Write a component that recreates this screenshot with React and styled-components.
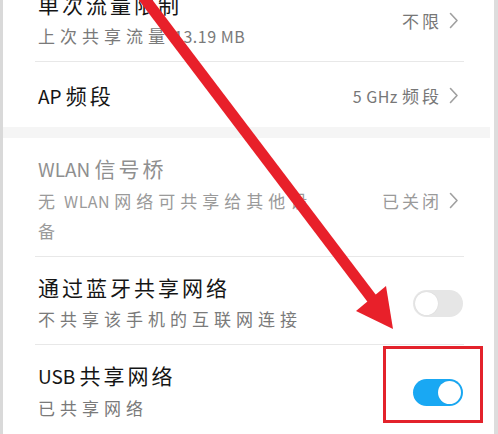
import React from "react";
import styled, { createGlobalStyle } from "styled-components";

const GlobalStyle = createGlobalStyle`
  html, body {
    margin: 0;
    padding: 0;
    background: #ffffff;
  }
  body {
    font-family: "Noto Sans CJK SC", "Noto Sans", sans-serif;
    overflow: hidden;
  }
`;

const Screen = styled.div`
  position: relative;
  width: 498px;
  height: 434px;
  overflow: hidden;
  box-sizing: border-box;
  background: #ffffff;
  border-left: 3px solid #d9d9d9;
  border-right: 4px solid #dddddd;
`;

const List = styled.div`
  display: flex;
  flex-direction: column;
  margin-top: -26px;
`;

const Row = styled.div`
  display: flex;
  align-items: center;
  justify-content: space-between;
  gap: 20px;
  margin: 0 30px 0 32px;
  padding: ${(p) => (p.$single ? "19px 0 17px" : "16px 0 10px")};
  border-bottom: ${(p) => (p.$last ? "none" : "1px solid #e8e8e8")};
`;

const Gap = styled.div`
  height: 11px;
  margin-right: 4px;
  background: #f5f5f5;
`;

const TextBlock = styled.div`
  display: flex;
  flex-direction: column;
  flex: 1;
  min-width: 0;
  max-width: 285px;
  padding-left: 3px;
`;

const Title = styled.div`
  font-size: 21px;
  line-height: 28px;
  letter-spacing: 3px;
  color: ${(p) => (p.$disabled ? "#8f8f8f" : "#151515")};
  white-space: nowrap;
`;

const Sub = styled.div`
  margin-top: 3px;
  font-size: 17px;
  line-height: 30px;
  letter-spacing: 5px;
  color: ${(p) => (p.$disabled ? "#9a9a9a" : "#7a7a7a")};
`;

const Latin = styled.span`
  font-size: ${(p) => (p.$small ? "16px" : "19px")};
  letter-spacing: ${(p) => (p.$small ? "0.5px" : "0")};
`;

const Value = styled.div`
  display: flex;
  align-items: center;
  gap: 7px;
  padding-right: 5px;
  font-size: 17px;
  letter-spacing: 3px;
  color: ${(p) => (p.$disabled ? "#9a9a9a" : "#777777")};
  white-space: nowrap;
`;

const Toggle = styled.div`
  position: relative;
  width: 50px;
  height: 27px;
  border-radius: 14px;
  flex-shrink: 0;
  margin-right: 1px;
  background: ${(p) => (p.$on ? "#19a8f3" : "#e6e6e6")};

  &::after {
    content: "";
    position: absolute;
    top: 2px;
    left: ${(p) => (p.$on ? "25px" : "2px")};
    width: 23px;
    height: 23px;
    border-radius: 50%;
    background: #ffffff;
    box-shadow: 0 0 1px rgba(0, 0, 0, 0.15);
  }
`;

const HighlightBox = styled.div`
  position: absolute;
  left: 380px;
  top: 346px;
  width: 100px;
  height: 77px;
  box-sizing: border-box;
  border: 3px solid #e3222b;
`;

const ArrowLayer = styled.svg`
  position: absolute;
  left: -3px;
  top: 0;
  pointer-events: none;
`;

const Chevron = () => (
  <svg width="10" height="17" viewBox="0 0 10 17">
    <path d="M1.5 1.5 L8 8.5 L1.5 15.5" fill="none" stroke="#a0a0a0" strokeWidth="1.6" strokeLinecap="round" strokeLinejoin="round" />
  </svg>
);

const SettingRow = ({ title, sub, value, toggle, disabled, single, last }) => (
  <Row $single={single} $last={last}>
    <TextBlock>
      <Title $disabled={disabled}>{title}</Title>
      {sub && <Sub $disabled={disabled}>{sub}</Sub>}
    </TextBlock>
    {value && (
      <Value $disabled={disabled}>
        <span>{value}</span>
        <Chevron />
      </Value>
    )}
    {toggle !== undefined && <Toggle $on={toggle} />}
  </Row>
);

export default function App() {
  return (
    <>
      <GlobalStyle />
      <Screen>
        <List>
          <SettingRow
            title="单次流量限制"
            sub={
              <>
                上次共享流量<Latin $small> 13.19 MB</Latin>
              </>
            }
            value="不限"
          />
          <SettingRow
            single
            last
            title={
              <>
                <Latin>AP </Latin>频段
              </>
            }
            value={
              <>
                <Latin $small>5 GHz </Latin>频段
              </>
            }
          />
          <Gap />
          <SettingRow
            disabled
            title={
              <>
                <Latin>WLAN </Latin>信号桥
              </>
            }
            sub={
              <>
                无<Latin $small> WLAN </Latin>网络可共享给其他设备
              </>
            }
            value="已关闭"
          />
          <SettingRow title="通过蓝牙共享网络" sub="不共享该手机的互联网连接" toggle={false} />
          <SettingRow
            last
            title={
              <>
                <Latin>USB </Latin>共享网络
              </>
            }
            sub="已共享网络"
            toggle={true}
          />
        </List>
        <HighlightBox />
        <ArrowLayer width="498" height="434" viewBox="0 0 498 434">
          <line x1="138" y1="-10" x2="373" y2="300" stroke="#e8202a" strokeWidth="11" />
          <polygon points="356,311 386,286 393,329" fill="#e8202a" />
        </ArrowLayer>
      </Screen>
    </>
  );
}
